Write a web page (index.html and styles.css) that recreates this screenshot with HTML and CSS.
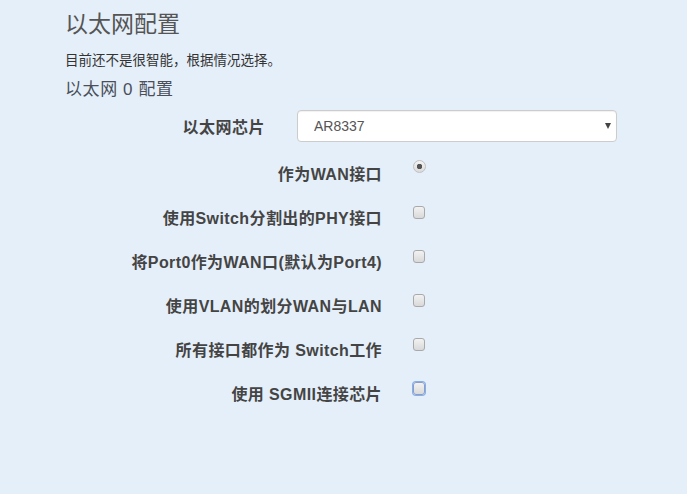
FILE: index.html
```
<!DOCTYPE html>
<html lang="zh-CN">
<head>
    <meta charset="UTF-8">
    <title>以太网配置</title>
    <link rel="stylesheet" href="styles.css">
</head>
<body>
    <div class="page">
        <h2 class="title">以太网配置</h2>
        <p class="desc">目前还不是很智能，根据情况选择。</p>
        <h3 class="section">以太网 0 配置</h3>
    </div>

    <div class="form">
        <div class="select-row">
            <label for="chip">以太网芯片</label>
            <span class="select-wrap">
                <select id="chip">
                    <option>AR8337</option>
                </select>
            </span>
        </div>

        <div class="check-row">
            <label for="asWan">作为WAN接口</label>
            <input type="radio" id="asWan" class="radio" checked>
        </div>
        <div class="check-row">
            <label for="phy">使用Switch分割出的PHY接口</label>
            <input type="checkbox" id="phy" class="check">
        </div>
        <div class="check-row">
            <label for="port0">将Port0作为WAN口(默认为Port4)</label>
            <input type="checkbox" id="port0" class="check">
        </div>
        <div class="check-row">
            <label for="vlan">使用VLAN的划分WAN与LAN</label>
            <input type="checkbox" id="vlan" class="check">
        </div>
        <div class="check-row">
            <label for="allSwitch">所有接口都作为 Switch工作</label>
            <input type="checkbox" id="allSwitch" class="check">
        </div>
        <div class="check-row">
            <label for="sgmii">使用 SGMII连接芯片</label>
            <input type="checkbox" id="sgmii" class="check focused">
        </div>
    </div>
</body>
</html>
```

FILE: styles.css
```
* {
    margin: 0;
    padding: 0;
    box-sizing: border-box;
}

body {
    background-color: #e5eff9;
    color: #444;
    font-family: "Liberation Sans", "Noto Sans CJK SC", sans-serif;
}

.page {
    padding: 8px 0 0 65px;
}

.title {
    font-size: 23px;
    line-height: 32px;
    font-weight: normal;
    color: #555;
}

.desc {
    margin-top: 11px;
    font-size: 13.5px;
    line-height: 20px;
    color: #333;
}

.section {
    margin-top: 7px;
    font-size: 17px;
    line-height: 24px;
    letter-spacing: 0.6px;
    font-weight: normal;
    color: #4a4f5a;
}

/* Form rows */
.form {
    margin-top: 8px;
}

.select-row {
    display: flex;
    align-items: center;
    height: 32px;
    margin-bottom: 11px;
}

.select-row label {
    width: 265px;
    text-align: right;
    font-size: 16px;
    letter-spacing: 0.5px;
    font-weight: bold;
    color: #444;
}

.select-wrap {
    position: relative;
    margin-left: 32px;
    width: 320px;
    height: 32px;
}

.select-wrap select {
    appearance: none;
    -webkit-appearance: none;
    width: 100%;
    height: 100%;
    padding-left: 16px;
    border: 1px solid #ccc;
    border-radius: 4px;
    background: #fff;
    box-shadow: inset 0 1px 1px rgba(0, 0, 0, 0.06);
    font-family: "Liberation Sans", sans-serif;
    font-size: 14px;
    color: #555;
}

.select-wrap::after {
    content: "";
    position: absolute;
    right: 6px;
    top: 13px;
    border-left: 3px solid transparent;
    border-right: 3px solid transparent;
    border-top: 6px solid #444;
}

.check-row {
    display: flex;
    align-items: flex-start;
    height: 44px;
}

.check-row label {
    width: 382px;
    text-align: right;
    line-height: 44px;
    font-size: 16px;
    letter-spacing: 0.4px;
    font-weight: bold;
    color: #444;
}

.check,
.radio {
    appearance: none;
    -webkit-appearance: none;
    width: 12px;
    height: 13px;
    margin: 9px 0 0 31px;
    border: 1px solid #a9a9a9;
    background: linear-gradient(#f2f2f2, #d9d9d9);
}

.check {
    border-radius: 3px;
}

.check.focused {
    border-color: #8d9fc0;
    box-shadow: 0 0 0 1px #85aef0;
}

.radio {
    width: 13px;
    margin-top: 7px;
    border-radius: 50%;
    border-color: #c0c0c0;
    background: radial-gradient(circle, #555 0, #555 2.5px, transparent 3px),
        linear-gradient(#f4f4f4, #dadada);
}
```
